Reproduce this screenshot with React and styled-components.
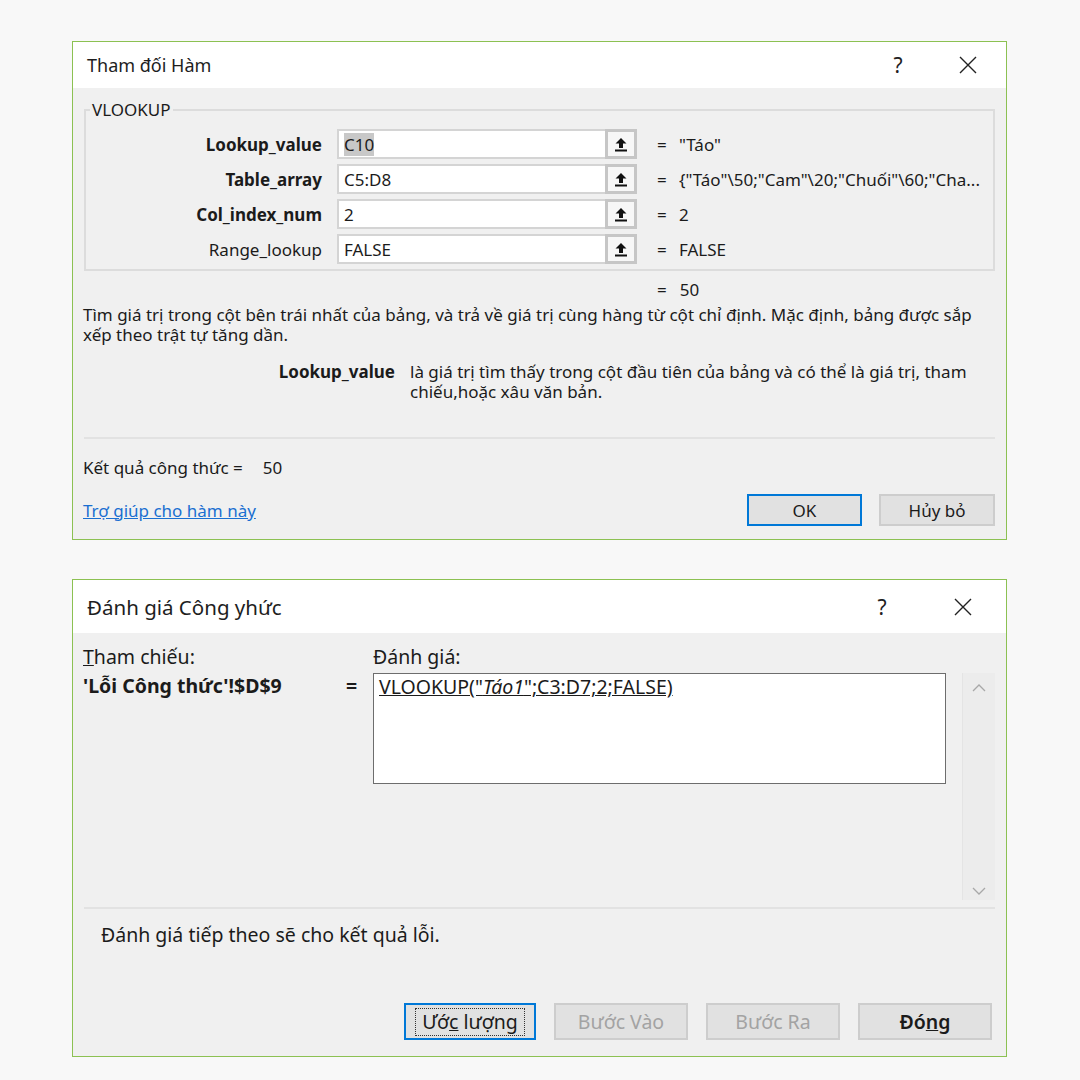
import React from "react";
import styled, { createGlobalStyle } from "styled-components";

const GlobalStyle = createGlobalStyle`
  html, body {
    margin: 0;
    padding: 0;
    background: #f8f8f8;
  }
  body {
    font-family: "Noto Sans", "Open Sans", sans-serif;
    color: #1b1b1b;
  }
`;

const Page = styled.div`
  width: 1080px;
  height: 1080px;
  box-sizing: border-box;
  padding: 41px 0 0 72px;
  display: flex;
  flex-direction: column;
  gap: 39px;
`;

const Dialog = styled.div`
  width: 935px;
  box-sizing: border-box;
  border: 1px solid #8cc152;
  background: #f0f0f0;
  display: flex;
  flex-direction: column;
`;

const TitleBar = styled.div`
  height: ${(p) => p.$h}px;
  background: #ffffff;
  display: flex;
  align-items: center;
  padding-left: 14px;
  font-size: ${(p) => p.$fs}px;
  color: #1e1e1e;
`;

const Title = styled.div`
  flex: 1;
`;

const TitleButton = styled.div`
  width: 60px;
  display: flex;
  justify-content: center;
  align-items: center;
  font-size: 21px;
  color: #222;
  margin-right: ${(p) => p.$mr || 0}px;
`;

const CloseIcon = () => (
  <svg width="18" height="18" viewBox="0 0 18 18">
    <path d="M1 1 L17 17 M17 1 L1 17" stroke="#222" strokeWidth="1.4" fill="none" />
  </svg>
);

/* ---------- dialog 1 ---------- */

const Body1 = styled.div`
  padding: 12px 11px 13px 10px;
  font-size: 17px;
`;

const Group = styled.fieldset`
  margin: 0 0 0 1px;
  padding: 9px 0 5px 0;
  border: 2px solid #dcdcdc;
  border-radius: 0;
  display: flex;
  flex-direction: column;
  gap: 5px;
`;

const Legend = styled.legend`
  padding: 0 2px;
  margin-left: 4px;
  font-size: 17px;
  line-height: 20px;
`;

const ArgRow = styled.div`
  display: grid;
  grid-template-columns: 251px 268px 32px 42px 313px;
  align-items: center;
  height: 30px;
`;

const ArgLabel = styled.div`
  text-align: right;
  padding-right: 15px;
  font-weight: ${(p) => (p.$bold ? 700 : 400)};
`;

const ArgInput = styled.div`
  height: 30px;
  box-sizing: border-box;
  background: #fff;
  border: 2px solid #d4d4d4;
  border-right: none;
  display: flex;
  align-items: center;
  padding-left: 5px;
`;

const Selected = styled.span`
  background: #c8c8c8;
`;

const RefButton = styled.div`
  height: 30px;
  box-sizing: border-box;
  border: 3px solid #c6c6c6;
  background: #f7f7f7;
  display: flex;
  align-items: center;
  justify-content: center;
`;

const UploadIcon = () => (
  <svg width="14" height="15" viewBox="0 0 14 15">
    <path d="M7 1 L1.5 6.5 H5 V11 H9 V6.5 H12.5 Z" fill="#111" />
    <rect x="1" y="12.5" width="12" height="2" fill="#111" />
  </svg>
);

const Eq = styled.div`
  padding-left: 20px;
`;

const ArgValue = styled.div`
  white-space: nowrap;
  overflow: hidden;
`;

const TotalRow = styled.div`
  display: flex;
  padding-left: 574px;
  margin-top: 9px;
  height: 20px;
  line-height: 20px;
  gap: 13px;
`;

const Description = styled.p`
  margin: 5px 0 0 0;
  line-height: 20px;
`;

const ArgHelp = styled.div`
  display: grid;
  grid-template-columns: 327px 585px;
  margin-top: 17px;
  line-height: 20px;
`;

const ArgHelpName = styled.div`
  font-weight: 700;
  text-align: right;
  padding-right: 15px;
`;

const Separator = styled.div`
  height: 2px;
  background: #e2e2e2;
  margin: ${(p) => p.$m};
`;

const ResultLine = styled.div`
  margin: 19px 0 0 0;
  line-height: 20px;
`;

const ResultValue = styled.span`
  margin-left: 20px;
`;

const Footer = styled.div`
  display: flex;
  align-items: center;
  margin-top: 16px;
`;

const HelpLink = styled.a`
  flex: 1;
  color: #1a6fd1;
  text-decoration: underline;
`;

const Button = styled.div`
  width: ${(p) => p.$w}px;
  height: ${(p) => p.$h}px;
  box-sizing: border-box;
  background: #e1e1e1;
  border: ${(p) => (p.$focus ? "2px solid #0078d7" : "2px solid #cdcdcd")};
  color: ${(p) => (p.$disabled ? "#a3a3a3" : "#1b1b1b")};
  display: flex;
  align-items: center;
  justify-content: center;
  margin-left: ${(p) => p.$ml || 0}px;
  font-size: ${(p) => p.$fs || 17}px;
  font-weight: ${(p) => (p.$bold ? 600 : 400)};
`;

const FocusRing = styled.span`
  border: 1px dotted #333;
  padding: 1px 6px;
  line-height: 24px;
`;

/* ---------- dialog 2 ---------- */

const Body2 = styled.div`
  padding: 14px 11px 16px 10px;
  font-size: 19.5px;
`;

const EvalGrid = styled.div`
  display: grid;
  grid-template-columns: 258px 32px 573px 16px 33px;
  grid-template-rows: 26px 227px;
`;

const Caption = styled.div`
  grid-row: 1;
  grid-column: ${(p) => p.$col};
  line-height: 20px;
  align-self: start;
`;

const RefCell = styled.div`
  grid-row: 2;
  grid-column: 1;
  font-weight: 700;
  line-height: 26px;
  white-space: nowrap;
`;

const EqCell = styled.div`
  grid-row: 2;
  grid-column: 2;
  line-height: 26px;
  padding-left: 5px;
  font-weight: 700;
`;

const EvalBox = styled.div`
  grid-row: 2;
  grid-column: 3;
  height: 111px;
  box-sizing: border-box;
  background: #fff;
  border: 1px solid #6d6d6d;
  padding: 0 5px;
  line-height: 26px;
`;

const Formula = styled.span`
  text-decoration: underline;
  em {
    font-style: italic;
  }
`;

const ScrollTrack = styled.div`
  grid-row: 2;
  grid-column: 5;
  background: #ececec;
  border-left: 1px solid #e4e4e4;
  display: flex;
  flex-direction: column;
  justify-content: space-between;
  align-items: center;
  padding: 10px 0 4px;
`;

const Chevron = ({ up }) => (
  <svg width="14" height="10" viewBox="0 0 14 10">
    <path d={up ? "M1 8 L7 2 L13 8" : "M1 2 L7 8 L13 2"} stroke="#a8a8a8" strokeWidth="1.3" fill="none" />
  </svg>
);

const Message = styled.div`
  margin: 14px 0 0 18px;
  line-height: 24px;
`;

const ButtonRow = styled.div`
  display: flex;
  justify-content: flex-end;
  margin-top: 56px;
  padding-right: 3px;
`;

const args = [
  { label: "Lookup_value", bold: true, value: <Selected>C10</Selected>, result: '"Táo"' },
  { label: "Table_array", bold: true, value: "C5:D8", result: '{"Táo"\\50;"Cam"\\20;"Chuối"\\60;"Cha...' },
  { label: "Col_index_num", bold: true, value: "2", result: "2" },
  { label: "Range_lookup", bold: false, value: "FALSE", result: "FALSE" },
];

export default function App() {
  return (
    <>
      <GlobalStyle />
      <Page>
        <Dialog>
          <TitleBar $h={46} $fs={18}>
            <Title>Tham đối Hàm</Title>
            <TitleButton $mr={10}>?</TitleButton>
            <TitleButton $mr={8}>
              <CloseIcon />
            </TitleButton>
          </TitleBar>
          <Body1>
            <Group>
              <Legend>VLOOKUP</Legend>
              {args.map((a) => (
                <ArgRow key={a.label}>
                  <ArgLabel $bold={a.bold}>{a.label}</ArgLabel>
                  <ArgInput>{a.value}</ArgInput>
                  <RefButton>
                    <UploadIcon />
                  </RefButton>
                  <Eq>=</Eq>
                  <ArgValue>{a.result}</ArgValue>
                </ArgRow>
              ))}
            </Group>
            <TotalRow>
              <span>=</span>
              <span>50</span>
            </TotalRow>
            <Description>
              Tìm giá trị trong cột bên trái nhất của bảng, và trả về giá trị cùng hàng từ cột chỉ định. Mặc định,
              bảng được sắp xếp theo trật tự tăng dần.
            </Description>
            <ArgHelp>
              <ArgHelpName>Lookup_value</ArgHelpName>
              <div>là giá trị tìm thấy trong cột đầu tiên của bảng và có thể là giá trị, tham chiếu,hoặc xâu văn bản.</div>
            </ArgHelp>
            <Separator $m="35px 0 0 1px" />
            <ResultLine>
              Kết quả công thức =<ResultValue>50</ResultValue>
            </ResultLine>
            <Footer>
              <HelpLink>Trợ giúp cho hàm này</HelpLink>
              <Button $w={115} $h={32} $focus>OK</Button>
              <Button $w={116} $h={32} $ml={17}>Hủy bỏ</Button>
            </Footer>
          </Body1>
        </Dialog>

        <Dialog>
          <TitleBar $h={53} $fs={20.5}>
            <Title>Đánh giá Công yhức</Title>
            <TitleButton $mr={21}>?</TitleButton>
            <TitleButton $mr={13}>
              <CloseIcon />
            </TitleButton>
          </TitleBar>
          <Body2>
            <EvalGrid>
              <Caption $col="1">
                <u>T</u>ham chiếu:
              </Caption>
              <Caption $col="3">
                Đánh <u>g</u>iá:
              </Caption>
              <RefCell>'Lỗi Công thức'!$D$9</RefCell>
              <EqCell>=</EqCell>
              <EvalBox>
                <Formula>
                  VLOOKUP("<em>Táo1</em>";C3:D7;2;FALSE)
                </Formula>
              </EvalBox>
              <ScrollTrack>
                <Chevron up />
                <Chevron />
              </ScrollTrack>
            </EvalGrid>
            <Separator $m="7px 0 0 1px" />
            <Message>Đánh giá tiếp theo sẽ cho kết quả lỗi.</Message>
            <ButtonRow>
              <Button $w={132} $h={37} $focus $fs={19.5}>
                <FocusRing>
                  Ướ<u>c</u> lượng
                </FocusRing>
              </Button>
              <Button $w={134} $h={37} $ml={18} $disabled $fs={19.5}>Bước Vào</Button>
              <Button $w={134} $h={37} $ml={18} $disabled $fs={19.5}>Bước Ra</Button>
              <Button $w={134} $h={37} $ml={18} $fs={19.5} $bold>
                Đó<u>n</u>g
              </Button>
            </ButtonRow>
          </Body2>
        </Dialog>
      </Page>
    </>
  );
}
